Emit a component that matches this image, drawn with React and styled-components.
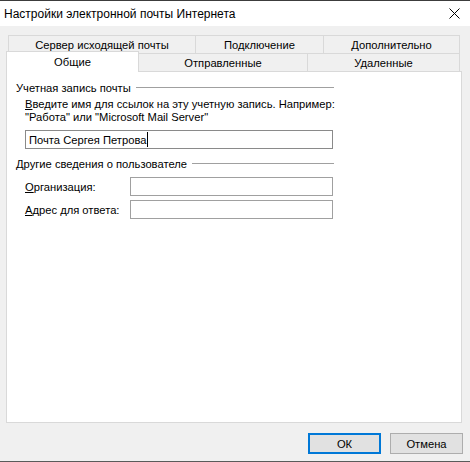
import React from "react";
import styled, { createGlobalStyle } from "styled-components";

const GlobalStyle = createGlobalStyle`
  html, body { margin: 0; padding: 0; background: #f0f0f0; }
  body { font-family: "Segoe UI", "Liberation Sans", Arial, sans-serif; font-size: 11.2px; color: #000; }
  * { box-sizing: border-box; }
`;

const Window = styled.div`
  width: 470px;
  height: 462px;
  display: flex;
  flex-direction: column;
  border-top: 1px solid #3c3c3c;
  border-bottom: 1px solid #5a5a5a;
  background: #f0f0f0;
`;

const TitleBar = styled.div`
  height: 25px;
  flex: none;
  background: #fff;
  display: flex;
  align-items: center;
  justify-content: space-between;
  padding: 0 10px 0 4px;
  font-size: 12px;
`;

const CloseIcon = () => (
  <svg width="11" height="11" viewBox="0 0 11 11">
    <path d="M0.5 0.5 L10.5 10.5 M10.5 0.5 L0.5 10.5" stroke="#000" strokeWidth="1" fill="none" />
  </svg>
);

const Body = styled.div`
  flex: 1;
  display: flex;
  flex-direction: column;
  padding: 9px 7px 0 6px;
`;

const TabRow = styled.div`
  display: flex;
  height: 18px;
  padding-left: ${(p) => p.$indent || 0}px;
  align-items: flex-end;
`;

const Tab = styled.div`
  width: ${(p) => p.$w}px;
  height: ${(p) => (p.$active ? 21 : 18)}px;
  margin-bottom: ${(p) => (p.$active ? -1 : 0)}px;
  position: relative;
  z-index: ${(p) => (p.$active ? 2 : 1)};
  background: ${(p) => (p.$active ? "#fff" : "#f0f0f0")};
  border: 1px solid #d9d9d9;
  border-bottom: none;
  border-left: ${(p) => (p.$first ? "1px solid #d9d9d9" : "none")};
  display: flex;
  align-items: ${(p) => (p.$active ? "flex-start" : "center")};
  padding-top: ${(p) => (p.$active ? 3 : 0)}px;
  justify-content: center;
  line-height: 14px;
  white-space: nowrap;
`;

const Panel = styled.div`
  width: 456px;
  height: 352px;
  background: #fff;
  border: 1px solid #d9d9d9;
  padding: 8px 0 0 9px;
`;

const Column = styled.div`
  width: 318px;
  display: flex;
  flex-direction: column;
`;

const GroupHeader = styled.div`
  display: flex;
  align-items: center;
  height: 15px;
  margin-top: ${(p) => p.$mt || 0}px;
  white-space: nowrap;
  &::after {
    content: "";
    flex: 1;
    height: 1px;
    background: #a0a0a0;
    margin-left: 5px;
  }
`;

const Indent = styled.div`
  padding-left: 9px;
  display: flex;
  flex-direction: column;
`;

const Desc = styled.div`
  margin-top: 3px;
  line-height: 13px;
  white-space: nowrap;
`;

const U = styled.span`
  text-decoration: underline;
  text-underline-offset: 1px;
`;

const Input = styled.div`
  height: 19px;
  width: ${(p) => p.$w}px;
  border: 1px solid ${(p) => p.$border || "#a0a0a0"};
  background: #fff;
  display: flex;
  align-items: center;
  padding-left: 3px;
  margin-top: ${(p) => p.$mt || 0}px;
  white-space: nowrap;
`;

const Caret = styled.span`
  display: inline-block;
  width: 1px;
  height: 15px;
  background: #000;
  margin-left: 1px;
`;

const FieldRow = styled.div`
  display: flex;
  align-items: center;
  margin-top: ${(p) => p.$mt || 0}px;
`;

const Label = styled.div`
  width: 105px;
  flex: none;
`;

const Footer = styled.div`
  display: flex;
  justify-content: flex-end;
  gap: 9px;
  margin-top: 10px;
`;

const Button = styled.div`
  width: 73px;
  height: 21px;
  background: #e1e1e1;
  border: ${(p) => (p.$default ? "2px solid #0078d7" : "1px solid #adadad")};
  display: flex;
  align-items: center;
  justify-content: center;
`;

export default function App() {
  return (
    <>
      <GlobalStyle />
      <Window>
        <TitleBar>
          <span>Настройки электронной почты Интернета</span>
          <CloseIcon />
        </TitleBar>
        <Body>
          <TabRow $indent={2}>
            <Tab $w={188} $first>Сервер исходящей почты</Tab>
            <Tab $w={128}>Подключение</Tab>
            <Tab $w={136}>Дополнительно</Tab>
          </TabRow>
          <TabRow>
            <Tab $w={133} $first $active>Общие</Tab>
            <Tab $w={169}>Отправленные</Tab>
            <Tab $w={152}>Удаленные</Tab>
          </TabRow>
          <Panel>
            <Column>
              <GroupHeader>Учетная запись почты</GroupHeader>
              <Indent>
                <Desc>
                  <U>В</U>ведите имя для ссылок на эту учетную запись. Например:
                  <br />
                  "Работа" или "Microsoft Mail Server"
                </Desc>
                <Input $w={308} $mt={6} $border="#8a8a8a">
                  Почта Сергея Петрова<Caret />
                </Input>
              </Indent>
              <GroupHeader $mt={7}>Другие сведения о пользователе</GroupHeader>
              <Indent>
                <FieldRow $mt={6}>
                  <Label><U>О</U>рганизация:</Label>
                  <Input $w={203} />
                </FieldRow>
                <FieldRow $mt={4}>
                  <Label><U>А</U>дрес для ответа:</Label>
                  <Input $w={203} />
                </FieldRow>
              </Indent>
            </Column>
          </Panel>
          <Footer>
            <Button $default>ОК</Button>
            <Button>Отмена</Button>
          </Footer>
        </Body>
      </Window>
    </>
  );
}
